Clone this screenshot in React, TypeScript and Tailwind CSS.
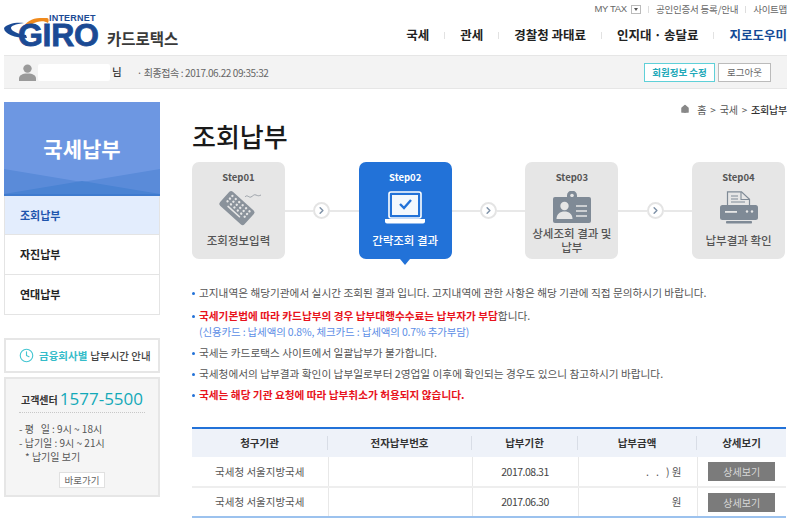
import { ChevronRight, Clock, Home } from "lucide-react";

const NAV = ["국세", "관세", "경찰청 과태료", "인지대\u2009·\u2009송달료"];
const SIDE = ["자진납부", "연대납부"];

function KeyboardIcon() {
  const keys: React.ReactNode[] = [];
  for (let r = 0; r < 3; r++) {
    for (let c = 0; c < 6; c++) {
      keys.push(<circle key={`${r}-${c}`} cx={5 + c * 4.6} cy={3.5 + r * 3.6} r="1.2" fill="#e6e6e6" />);
    }
  }
  return (
    <svg width="44" height="40" viewBox="0 0 44 40">
      <path d="M28 10c2-3 4 1 6 0s3-3 5-2 3 1 5 0" fill="none" stroke="#8a929b" strokeWidth="0.8" />
      <g transform="translate(14 3) rotate(42)">
        <rect x="0" y="0" width="33" height="19" rx="2.5" fill="#8a929b" />
        <g>{keys}</g>
        <rect x="8" y="13.4" width="17" height="1.6" rx="0.8" fill="#e6e6e6" />
      </g>
    </svg>
  );
}

function LaptopIcon() {
  return (
    <svg width="42" height="33" viewBox="0 0 42 33">
      <rect x="5" y="1" width="32" height="26" rx="2" fill="none" stroke="#fff" strokeWidth="1.6" />
      <rect x="8" y="4" width="26" height="20" fill="#fff" opacity="0.95" />
      <path d="M16 13l4 4 7-8" fill="none" stroke="#2272d8" strokeWidth="2.4" />
      <path d="M1 28h40v2.5a2 2 0 0 1-2 2H3a2 2 0 0 1-2-2z" fill="#fff" />
    </svg>
  );
}

function BadgeIcon() {
  return (
    <svg width="38" height="32" viewBox="0 0 38 32">
      <path d="M14 6V4.5a5 5 0 0 1 10 0V6h4v2H10V6z" fill="#7f8a96" />
      <circle cx="19" cy="4.5" r="1.8" fill="#e6e6e6" />
      <rect x="0" y="6" width="38" height="26" rx="2" fill="#7f8a96" />
      <circle cx="11.5" cy="15" r="4.2" fill="#e6e6e6" />
      <path d="M3.5 28c0-5 3.5-7.5 8-7.5s8 2.5 8 7.5z" fill="#e6e6e6" />
      <path d="M23 15h11M23 20h11M23 25h11" stroke="#e6e6e6" strokeWidth="1.4" />
    </svg>
  );
}

function PrinterIcon() {
  return (
    <svg width="38" height="33" viewBox="0 0 38 33">
      <path d="M7.5 14V.8h14l8 7.5V14" fill="none" stroke="#7f8a96" strokeWidth="1.2" />
      <path d="M21 1v7.5h8.5M11 5h7M11 8h7M11 11h14" fill="none" stroke="#7f8a96" strokeWidth="1.1" />
      <rect x="0" y="14" width="38" height="15" rx="2.5" fill="#7f8a96" />
      <rect x="5" y="20" width="12" height="1.8" fill="#e6e6e6" />
      <circle cx="27" cy="20.5" r="1.2" fill="#e6e6e6" />
      <circle cx="32" cy="20.5" r="1.2" fill="#e6e6e6" />
      <rect x="6" y="30" width="26" height="2.5" rx="0.8" fill="#7f8a96" />
    </svg>
  );
}

function UserIcon() {
  return (
    <svg width="17" height="17" viewBox="0 0 17 17" className="ml-[15px] shrink-0">
      <circle cx="8.5" cy="4.6" r="4.2" fill="#9a9a9a" />
      <path d="M0 17v-2.5c0-3 3-5 8.5-5s8.5 2 8.5 5V17z" fill="#9a9a9a" />
    </svg>
  );
}

function StepCard({
  step,
  icon,
  active,
  children,
}: {
  step: string;
  icon: React.ReactNode;
  active?: boolean;
  children: React.ReactNode;
}) {
  return (
    <div
      className={
        active
          ? "relative flex h-[97px] w-[93px] shrink-0 flex-col items-center rounded-[7px] bg-[#2272d8] pt-[9px] text-white"
          : "flex h-[97px] w-[93px] shrink-0 flex-col items-center rounded-[7px] bg-[#e6e6e6] pt-[9px] text-[#555]"
      }
    >
      <div className="h-[13px] text-[9.5px] leading-[13px] font-bold">{step}</div>
      <div className="mt-[5px] flex h-[36px] items-center justify-center">{icon}</div>
      <div className="flex flex-1 items-center pb-[4px] text-center text-[11.5px] leading-[14px] font-medium">{children}</div>
      {active && (
        <div className="absolute top-full left-1/2 -ml-[5px] h-0 w-0 border-x-[5px] border-t-[6px] border-x-transparent border-t-[#2272d8]" />
      )}
    </div>
  );
}

function Connector() {
  return (
    <div className="flex flex-1 items-center">
      <div className="h-[2px] flex-1 bg-[#e8e8e8]" />
      <div className="flex h-[17px] w-[17px] items-center justify-center rounded-full border-2 border-[#e4e4e4] bg-white">
        <ChevronRight size={11} strokeWidth={3.2} className="text-[#7f92a8]" />
      </div>
      <div className="h-[2px] flex-1 bg-[#e8e8e8]" />
    </div>
  );
}

function Bullet({ children, className }: { children: React.ReactNode; className: string }) {
  return (
    <li className={`flex items-center gap-[4px] text-[10.67px] leading-[16px] whitespace-nowrap ${className}`}>
      <span className="h-[3px] w-[3px] shrink-0 rounded-full bg-[#2272d8]" />
      <span>{children}</span>
    </li>
  );
}

function DetailButton() {
  return (
    <span className="inline-block h-[19px] w-[67px] bg-[#7b7b7b] text-center text-[10px] leading-[19px] text-[#d8d8d8]">상세보기</span>
  );
}

function Row({ due, amount, last }: { due: string; amount: string; last?: boolean }) {
  return (
    <tr className={last ? "h-[30px] border-b-2 border-[#9cc2ee] text-[10.5px] text-[#555]" : "h-[30px] border-b-2 border-[#eeeeee] text-[10.5px] text-[#555]"}>
      <td className="border-r border-[#e8e8e8] text-center">국세청 서울지방국세</td>
      <td className="border-r border-[#e8e8e8]" />
      <td className="border-r border-[#e8e8e8] text-center tracking-[-0.5px] text-[#444]">{due}</td>
      <td className="border-r border-[#e8e8e8] pr-[15px] text-right">{amount}원</td>
      <td className="text-center">
        <DetailButton />
      </td>
    </tr>
  );
}

export default function App() {
  return (
    <div className="h-[519px] w-[793px] overflow-hidden bg-white font-['Noto_Sans_CJK_KR','Noto_Sans',sans-serif]">
      {/* top header */}
      <header className="flex h-[55px] items-start justify-between pr-[6px] pl-[4px]">
        <div className="relative h-[55px] w-[180px]">
          <svg className="absolute top-[17px] left-0" width="46" height="24" viewBox="0 0 46 24">
            <path d="M0 11C3 7 11 5 20 6 11 7 7 9 7 11c0 3 7 6 15 7l1 3C11 21 0 17 0 11z" fill="#1b4a94" />
            <path d="M19 12C21 5 28 1 36 1h7c2 0 2 3 1 5-3-2-7-2-11-1-4 1-8 4-10 7z" fill="#f08a1c" />
          </svg>
          <span className="absolute top-[13px] left-[45px] font-['Liberation_Sans',sans-serif] text-[9px] leading-[10px] font-bold tracking-[0.2px] text-[#1b4a94]">INTERNET</span>
          <span className="absolute top-[23px] left-[14px] font-['Liberation_Sans',sans-serif] text-[32px] leading-[25px] font-bold tracking-[-0.3px] text-[#1b4a94] [-webkit-text-stroke:0.8px_#1b4a94]">GIRO</span>
          <span className="absolute top-[28px] left-[103px] text-[15.5px] leading-[20px] font-bold text-[#3a3a3a]">카드로택스</span>
        </div>
        <div className="flex flex-col items-end">
          <div className="flex h-[18px] items-center text-[9.5px] text-[#666]">
            <span className="font-['Liberation_Sans',sans-serif] tracking-[-0.3px]">MY TAX</span>
            <span className="ml-[4px] flex h-[9px] w-[10px] items-center justify-center border border-[#bbb]">
              <span className="h-0 w-0 border-x-[2px] border-t-[3px] border-x-transparent border-t-[#555]" />
            </span>
            <span className="mx-[7px] h-[7px] w-px bg-[#ddd]" />
            <span className="tracking-[-0.2px]">공인인증서 등록/안내</span>
            <span className="mx-[7px] h-[7px] w-px bg-[#ddd]" />
            <span className="tracking-[-0.3px]">사이트맵</span>
          </div>
          <nav className="mt-[8px] flex items-center text-[12.5px] leading-[18px] font-bold text-[#222]">
            {NAV.map((item) => (
              <div key={item} className="flex items-center">
                <span>{item}</span>
                <span className="mx-[15px] h-[7px] w-px bg-[#e2e2e2]" />
              </div>
            ))}
            <span className="text-[#124a96]">지로도우미</span>
          </nav>
        </div>
      </header>

      {/* user bar */}
      <div className="mx-[4px] flex h-[34px] w-[783px] items-center border-y border-[#e6e6e6] bg-[#f3f3f3] pr-[16px]">
        <UserIcon />
        <div className="ml-[2px] h-[17px] w-[72px] rounded-[2px] bg-white" />
        <span className="ml-[2px] text-[10.5px] font-medium text-[#333]">님</span>
        <span className="ml-[15px] text-[10px] tracking-[-0.4px] text-[#666]">· 최종접속 : 2017.06.22 09:35:32</span>
        <div className="ml-auto flex gap-[3px] text-[9.5px] font-bold">
          <span className="flex h-[19px] w-[71px] items-center justify-center border border-[#5fd0d8] bg-white text-[#20a8b8]">회원정보 수정</span>
          <span className="flex h-[19px] w-[53px] items-center justify-center border border-[#bbbbbb] bg-white font-normal text-[#666]">로그아웃</span>
        </div>
      </div>

      <div className="flex pt-[13px] pl-[4px]">
        {/* sidebar */}
        <aside className="w-[156px] shrink-0">
          <div className="relative flex h-[94px] items-start justify-center border-b-2 border-[#3f7bcf] bg-[#6d97e2] pt-[31px]">
            <svg className="absolute inset-x-0 bottom-0" width="156" height="25" viewBox="0 0 156 25" preserveAspectRatio="none">
              <polygon points="0,0 78,13 156,0 156,25 0,25" fill="#5a8bd9" />
              <polygon points="0,25 78,12 156,25" fill="#4a83d3" />
            </svg>
            <span className="relative text-[21px] leading-[30px] font-bold text-white">국세납부</span>
          </div>
          <div className="border-x border-b border-[#e4e4e4]">
            <div className="flex h-[39px] items-center border-b border-[#e4e4e4] bg-[#e3edfd] pl-[15px] text-[11px] font-bold text-[#1f55ad]">조회납부</div>
            {SIDE.map((item, i) => (
              <div key={item} className={i === 0 ? "flex h-[40px] items-center border-b border-[#e4e4e4] pl-[15px] text-[11px] font-bold text-[#222]" : "flex h-[39px] items-center pl-[15px] text-[11px] font-bold text-[#222]"}>
                {item}
              </div>
            ))}
          </div>

          <div className="mt-[23px] flex h-[35px] items-center border-2 border-[#e6e6e6] pl-[13px] text-[10.5px] whitespace-nowrap">
            <Clock size={15} strokeWidth={1.8} className="shrink-0 text-[#45c6d2]" />
            <span className="ml-[5px] font-bold text-[#35bcc9]">금융회사별</span>
            <span className="ml-[3px] font-medium text-[#444]">납부시간 안내</span>
          </div>

          <div className="mt-[4px] flex h-[120px] flex-col border-2 border-[#e6e6e6] bg-[#f5f5f5] px-[13px] pt-[9px] text-[10px] text-[#555]">
            <div className="flex items-center justify-center gap-[2px] border-b border-dotted border-[#c8c8c8] pb-[2px] whitespace-nowrap">
              <span className="text-[10px] font-bold text-[#333]">고객센터</span>
              <span className="font-['Open_Sans',sans-serif] text-[17px] leading-[22px] text-[#13a9b8]">1577-5500</span>
            </div>
            <div className="mt-[9px] leading-[14px] whitespace-nowrap">- 평 &nbsp; 일 : 9시 ~ 18시</div>
            <div className="leading-[14px] whitespace-nowrap">- 납기일 : 9시 ~ 21시</div>
            <div className="pl-[6px] leading-[14px] whitespace-nowrap">* 납기일 보기</div>
            <div className="mt-[8px] flex justify-center">
              <span className="flex h-[16px] w-[46px] items-center justify-center border border-[#e0e0e0] bg-white text-[9.5px] text-[#666]">바로가기</span>
            </div>
          </div>
        </aside>

        {/* main */}
        <main className="ml-[32px] w-[595px] shrink-0">
          <div className="flex h-[14px] items-center justify-end gap-[4px] text-[10px] tracking-[-0.2px] text-[#555]">
            <Home size={10} strokeWidth={0} fill="#888" className="mr-[3px]" />
            <span>홈</span>
            <span>&gt;</span>
            <span>국세</span>
            <span>&gt;</span>
            <span className="font-medium text-[#333]">조회납부</span>
          </div>
          <h1 className="mt-[2px] text-[26px] leading-[36px] font-medium text-[#1a1a1a]">조회납부</h1>

          <div className="mt-[8px] flex w-[593px] items-center">
            <StepCard step="Step01" icon={<KeyboardIcon />}>조회정보입력</StepCard>
            <Connector />
            <StepCard step="Step02" icon={<LaptopIcon />} active>간략조회 결과</StepCard>
            <Connector />
            <StepCard step="Step03" icon={<BadgeIcon />}>
              <span>상세조회 결과 및<br />납부</span>
            </StepCard>
            <Connector />
            <StepCard step="Step04" icon={<PrinterIcon />}>납부결과 확인</StepCard>
          </div>

          <ul className="mt-[26px]">
            <Bullet className="text-[#555]">고지내역은 해당기관에서 실시간 조회된 결과 입니다. 고지내역에 관한 사항은 해당 기관에 직접 문의하시기 바랍니다.</Bullet>
            <Bullet className="mt-[7px] text-[#555]">
              <strong className="font-bold text-[#e8131c]">국세기본법에 따라 카드납부의 경우 납부대행수수료는 납부자가 부담</strong>합니다.
            </Bullet>
            <li className="pl-[7px] text-[10.5px] leading-[16px] tracking-[-0.15px] whitespace-nowrap text-[#5c8ee6]">(신용카드 : 납세액의 0.8%, 체크카드 : 납세액의 0.7% 추가부담)</li>
            <Bullet className="mt-[5px] text-[#555]">국세는 카드로택스 사이트에서 일괄납부가 불가합니다.</Bullet>
            <Bullet className="mt-[5px] text-[#555]">국세청에서의 납부결과 확인이 납부일로부터 2영업일 이후에 확인되는 경우도 있으니 참고하시기 바랍니다.</Bullet>
            <Bullet className="mt-[5px] text-[#555]">
              <strong className="font-bold text-[#e8131c]">국세는 해당 기관 요청에 따라 납부취소가 허용되지 않습니다.</strong>
            </Bullet>
          </ul>

          <table className="mt-[24px] w-[594px] table-fixed border-t-2 border-[#2272d8]">
            <colgroup>
              <col className="w-[136px]" />
              <col className="w-[144px]" />
              <col className="w-[106px]" />
              <col className="w-[119px]" />
              <col className="w-[89px]" />
            </colgroup>
            <thead>
              <tr className="h-[29px] bg-[#eef2f9] text-[10.5px] font-bold text-[#333]">
                {["청구기관", "전자납부번호", "납부기한", "납부금액", "상세보기"].map((h, i) => (
                  <th key={h} className="p-0 font-bold">
                    <div className={i < 4 ? "border-r border-[#d8dde6] leading-[14px]" : "leading-[14px]"}>{h}</div>
                  </th>
                ))}
              </tr>
            </thead>
            <tbody>
              <Row due="2017.08.31" amount={". \u00a0 . \u00a0 ) "} />
              <Row due="2017.06.30" amount="" last />
            </tbody>
          </table>
        </main>
      </div>
    </div>
  );
}
